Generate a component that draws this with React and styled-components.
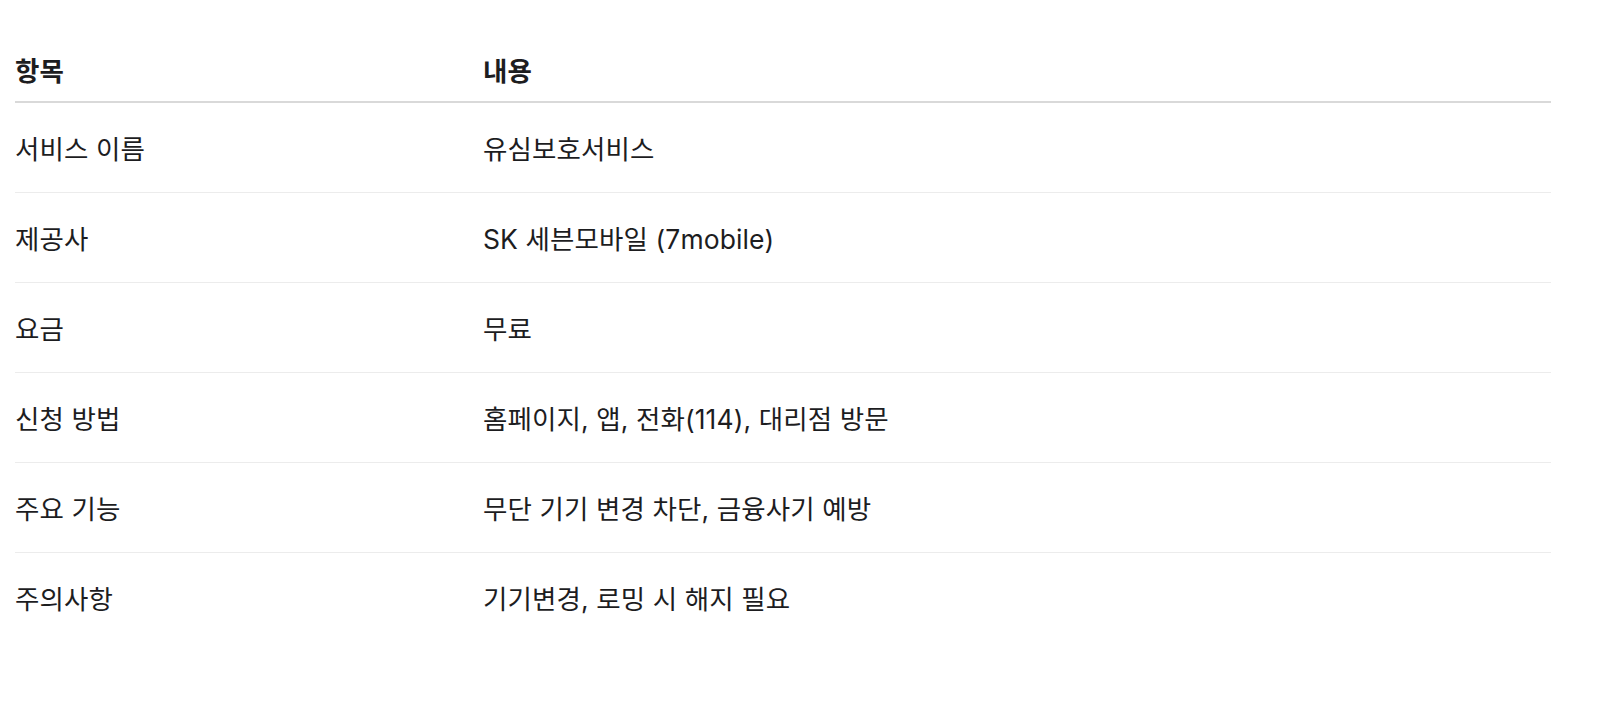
import React from "react";
import styled, { createGlobalStyle } from "styled-components";

const Global = createGlobalStyle`
  html, body { margin: 0; padding: 0; background: #fff; }
  body {
    font-family: Inter, "Noto Sans CJK KR", sans-serif;
    color: #1d1d1f;
  }
`;

const Page = styled.div`
  padding: 38px 69px 0 15px;
`;

const Table = styled.div`
  display: grid;
  grid-template-columns: 468px 1fr;
  width: 1536px;
`;

const HeadCell = styled.div`
  height: 63px;
  display: flex;
  align-items: center;
  font-size: 26.5px;
  font-weight: 700;
  border-bottom: 2px solid #d9d9d9;
`;

const Cell = styled.div`
  height: 89px;
  display: flex;
  align-items: center;
  font-size: 26.5px;
  font-weight: 400;
  letter-spacing: 0.1px;
  border-bottom: ${(p) => (p.$last ? "none" : "1px solid #ececec")};
`;

const rows = [
  ["서비스 이름", "유심보호서비스"],
  ["제공사", "SK 세븐모바일 (7mobile)"],
  ["요금", "무료"],
  ["신청 방법", "홈페이지, 앱, 전화(114), 대리점 방문"],
  ["주요 기능", "무단 기기 변경 차단, 금융사기 예방"],
  ["주의사항", "기기변경, 로밍 시 해지 필요"],
];

export default function App() {
  return (
    <>
      <Global />
      <Page>
        <Table>
          <HeadCell>항목</HeadCell>
          <HeadCell>내용</HeadCell>
          {rows.map(([k, v], i) => (
            <React.Fragment key={k}>
              <Cell $last={i === rows.length - 1}>{k}</Cell>
              <Cell $last={i === rows.length - 1}>{v}</Cell>
            </React.Fragment>
          ))}
        </Table>
      </Page>
    </>
  );
}
